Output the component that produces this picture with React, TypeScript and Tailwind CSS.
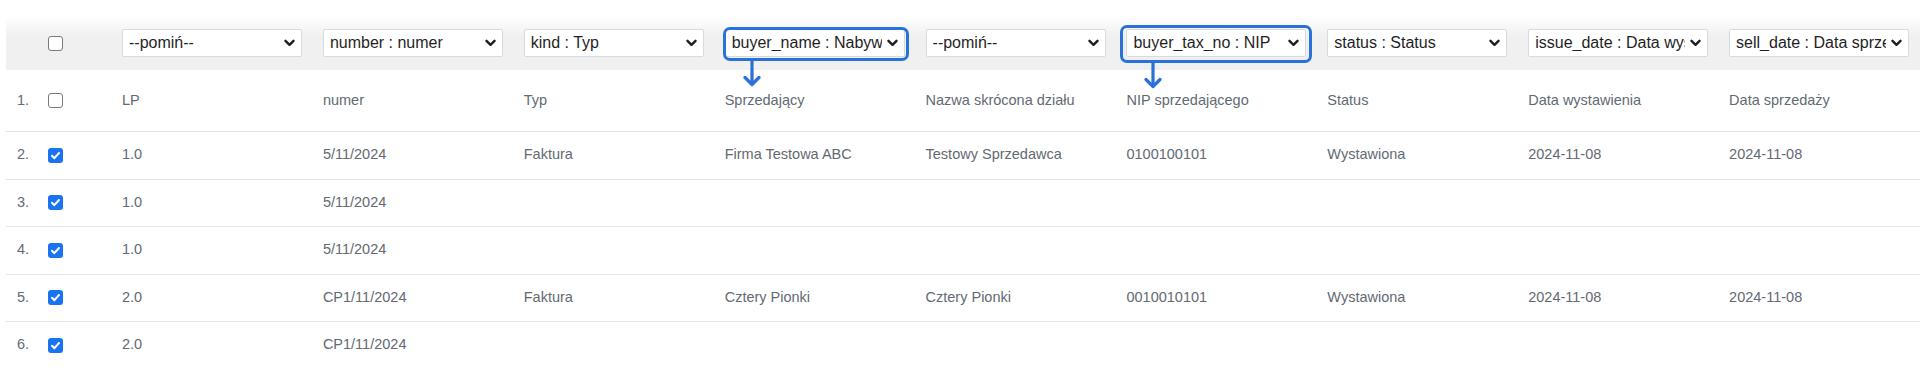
import React from "react";

const GRID = "grid grid-cols-[34px_72px_repeat(9,minmax(0,1fr))]";

const mappings = [
  { value: "--pomiń--" },
  { value: "number : numer" },
  { value: "kind : Typ" },
  { value: "buyer_name : Nabywca", mark: "a" },
  { value: "--pomiń--" },
  { value: "buyer_tax_no : NIP", mark: "b" },
  { value: "status : Status" },
  { value: "issue_date : Data wystawienia" },
  { value: "sell_date : Data sprzedaży" },
];

const labels = [
  "LP",
  "numer",
  "Typ",
  "Sprzedający",
  "Nazwa skrócona działu",
  "NIP sprzedającego",
  "Status",
  "Data wystawienia",
  "Data sprzedaży",
];

const rows: string[][] = [
  ["1.0", "5/11/2024", "Faktura", "Firma Testowa ABC", "Testowy Sprzedawca", "0100100101", "Wystawiona", "2024-11-08", "2024-11-08"],
  ["1.0", "5/11/2024", "", "", "", "", "", "", ""],
  ["1.0", "5/11/2024", "", "", "", "", "", "", ""],
  ["2.0", "CP1/11/2024", "Faktura", "Cztery Pionki", "Cztery Pionki", "0010010101", "Wystawiona", "2024-11-08", "2024-11-08"],
  ["2.0", "CP1/11/2024", "", "", "", "", "", "", ""],
];

function Chevron() {
  return (
    <svg
      className="pointer-events-none absolute right-[7px] top-1/2 -translate-y-1/2"
      width="11"
      height="8"
      viewBox="0 0 11 8"
      fill="none"
    >
      <path d="M1.5 1.8 5.5 5.8 9.5 1.8" stroke="#1f1f1f" strokeWidth="2.4" strokeLinecap="round" strokeLinejoin="round" />
    </svg>
  );
}

function DownArrow({ left }: { left: number }) {
  return (
    <svg
      className="pointer-events-none absolute top-full z-10"
      style={{ left }}
      width="18"
      height="30"
      viewBox="0 0 18 30"
      fill="none"
    >
      <path d="M9 0 V26" stroke="#2a72d8" strokeWidth="3.2" />
      <path d="M2 19.5 9 26.5 16 19.5" stroke="#2a72d8" strokeWidth="3.2" strokeLinecap="round" strokeLinejoin="round" />
    </svg>
  );
}

function MapSelect({ value, mark }: { value: string; mark?: string }) {
  return (
    <div className="relative w-[180px]">
      <select
        defaultValue={value}
        className="block h-[28px] w-full appearance-none overflow-hidden whitespace-nowrap text-clip rounded-[2px] border border-[#d6dbe1] bg-white pl-[6px] pr-[22px] text-[16px] leading-none text-[#1f1f1f] outline-none"
      >
        <option>{value}</option>
      </select>
      <Chevron />
      {mark === "a" && (
        <div className="pointer-events-none absolute -top-[2px] -bottom-[4px] -left-[2px] -right-[4px] rounded-[7px] border-[3px] border-[#2a72d8]">
          <DownArrow left={17} />
        </div>
      )}
      {mark === "b" && (
        <div className="pointer-events-none absolute -top-[4px] -bottom-[6px] -left-[6px] -right-[6px] rounded-[7px] border-[3px] border-[#2a72d8]">
          <DownArrow left={21} />
        </div>
      )}
    </div>
  );
}

function Check({ checked }: { checked: boolean }) {
  if (checked) {
    return (
      <span className="flex h-[15px] w-[15px] items-center justify-center rounded-[3px] bg-[#1a73f0]">
        <svg width="11" height="11" viewBox="0 0 11 11" fill="none">
          <path d="M2 5.8 4.4 8.2 9 3" stroke="white" strokeWidth="2" strokeLinecap="round" strokeLinejoin="round" />
        </svg>
      </span>
    );
  }
  return <span className="block h-[15px] w-[15px] rounded-[3px] border-[1.5px] border-[#7a7a7a] bg-white" />;
}

export default function App() {
  return (
    <div className="min-h-[376px] bg-white pl-[6px] pt-[15px] font-['Liberation_Sans',Arial,sans-serif]">
      {/* mapping row */}
      <div className={`${GRID} h-[55px] items-center bg-linear-to-b from-white from-0% to-[#f0f0f0] to-[40%]`}>
        <div />
        <div className="pl-[8px] pt-[1px]">
          <Check checked={false} />
        </div>
        {mappings.map((m, i) => (
          <div key={i} className="pl-[10px]">
            <MapSelect value={m.value} mark={m.mark} />
          </div>
        ))}
      </div>

      {/* first data row = source headers */}
      <div className={`${GRID} h-[61px] items-center text-[14.5px] text-[#636a73]`}>
        <div className="pl-[11px]">1.</div>
        <div className="pl-[8px]">
          <Check checked={false} />
        </div>
        {labels.map((l, i) => (
          <div key={i} className="truncate pl-[10px]">
            {l}
          </div>
        ))}
      </div>

      {rows.map((r, ri) => (
        <div
          key={ri}
          className={`${GRID} h-[47.5px] items-center border-t border-[#e4e4e4] text-[14.5px] text-[#636a73]`}
        >
          <div className="pl-[11px]">{ri + 2}.</div>
          <div className="pl-[8px]">
            <Check checked />
          </div>
          {r.map((c, ci) => (
            <div key={ci} className="truncate pl-[10px]">
              {c}
            </div>
          ))}
        </div>
      ))}
    </div>
  );
}
